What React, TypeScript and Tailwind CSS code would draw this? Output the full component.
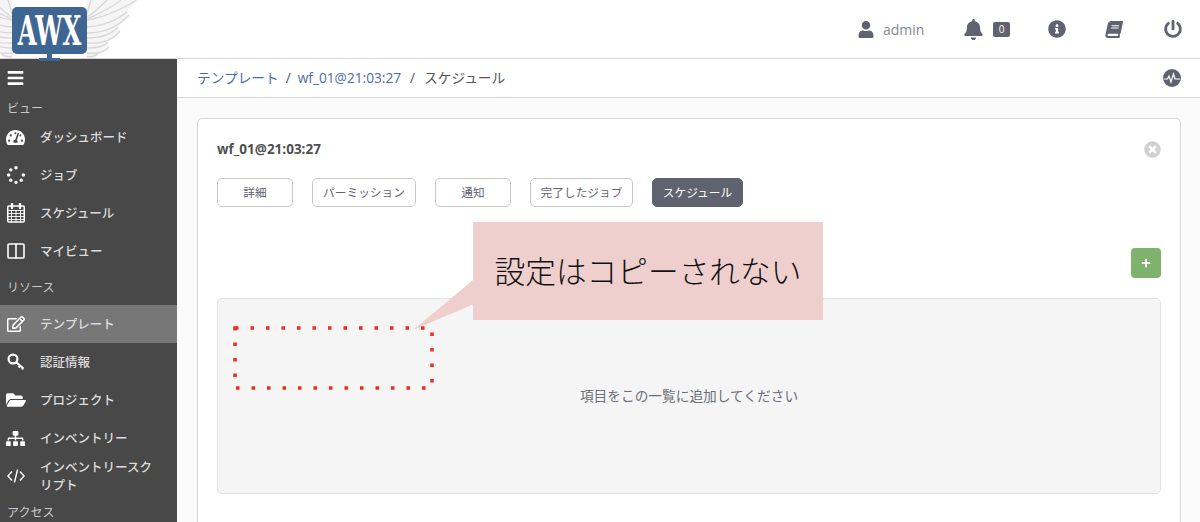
import React from 'react';
import {
  FaBars, FaBell, FaBook, FaFolderOpen, FaInfoCircle, FaPlus,
  FaPowerOff, FaRegEdit, FaSitemap, FaSpinner, FaTachometerAlt, FaTimesCircle, FaUser
} from 'react-icons/fa';

const font = 'font-["Open_Sans","Noto_Sans_CJK_JP",sans-serif]';

const ColumnsIcon = () => (
  <svg width="18" height="16" viewBox="0 0 18 16" fill="none" stroke="currentColor" strokeWidth="1.6">
    <rect x="1" y="1" width="16" height="14" rx="1" />
    <path d="M9 1v14" />
  </svg>
);

const CalendarIcon = () => (
  <svg width="18" height="20" viewBox="0 0 18 20" fill="none" stroke="currentColor">
    <rect x="0.75" y="3" width="16.5" height="16" rx="1" strokeWidth="1.5" />
    <path d="M1 7.5h16M1 10.5h16M1 13.5h16M1 16.5h16M4.5 7v12M9 7v12M13.5 7v12" strokeWidth="0.9" />
    <path d="M5 1v4M13 1v4" strokeWidth="2.4" strokeLinecap="round" />
  </svg>
);

const KeyIcon = () => (
  <svg width="18" height="18" viewBox="0 0 18 18" fill="none" stroke="currentColor" strokeWidth="2.2">
    <circle cx="6" cy="6" r="4.4" />
    <path d="M9.5 9.5l7 6M13 12.5l-1.5 2M16 15l-1 1.5" />
  </svg>
);

const CodeIcon = () => (
  <svg width="18" height="14" viewBox="0 0 18 14" fill="none" stroke="currentColor" strokeWidth="1.4">
    <path d="M5 2.5L0.9 7 5 11.5M13 2.5L17.1 7 13 11.5M10.6 0.5L7.4 13.5" />
  </svg>
);

const Wing = ({ className }: { className: string }) => (
  <svg width="50" height="58" viewBox="0 0 50 58" className={className}>
    <path d="M0 0H50L40 12L42 15L31 27L33 31L21 42L22 47L11 53L8 60H0Z" fill="#f5f5f5" />
    <g fill="none" stroke="#d9d9d9" strokeWidth="1.4">
      <path d="M0 20C14 18 30 12 50 0" />
      <path d="M0 27C14 26 28 22 40 12" />
      <path d="M0 33C14 33 30 28 42 15" />
      <path d="M0 38C12 38 24 35 31 27" />
      <path d="M0 43C14 44 26 40 33 31" />
      <path d="M0 48C10 48 18 46 21 42" />
      <path d="M0 53C10 54 18 52 22 47" />
      <path d="M0 57C5 57 9 56 11 53" />
      <path d="M4 0C2 6 1 10 0 14" />
      <path d="M20 0C14 6 8 12 0 17" />
      <path d="M34 0C24 8 14 13 0 19" />
    </g>
  </svg>
);

const Logo = () => (
  <div className="absolute left-0 top-0 h-[62px] w-[137px] overflow-hidden">
    <Wing className="absolute left-[87px] top-0" />
    <Wing className="absolute -left-[38px] top-0 -scale-x-100" />
    <div className="absolute left-[12px] top-[7px] flex h-[47px] w-[75px] items-center justify-center rounded-[5px] bg-[#3f6592]">
      <span className='font-["DejaVu_Serif_Condensed",serif] scale-y-150 text-[27px] font-bold leading-none text-white'>AWX</span>
    </div>
    <div className="absolute left-[47px] top-[54px] h-[4px] w-[5px] bg-[#3f6592]" />
    <div className="absolute left-[39px] top-[58px] h-[3px] w-[21px] bg-[#3f6592]" />
  </div>
);

const Header = () => (
  <header className="relative z-10 flex h-[59px] shrink-0 items-center border-b border-[#d7d7d7] bg-white text-[#5f6370]">
    <Logo />
    <div className="ml-auto flex items-center pr-[18px]">
      <FaUser className="h-[17px] w-[16px]" />
      <span className="ml-[9px] w-[41px] text-[14px] text-[#848992]">admin</span>
      <FaBell className="ml-[40px] h-[21px] w-[19px]" />
      <span className="ml-[10px] flex h-[15px] w-[17px] items-center justify-center rounded-[2px] bg-[#5f6370] text-[10px] text-white">0</span>
      <FaInfoCircle className="ml-[38px] h-[18px] w-[18px]" />
      <FaBook className="ml-[40px] h-[17px] w-[16px] -skew-x-12" />
      <FaPowerOff className="ml-[42px] h-[18px] w-[18px]" />
    </div>
  </header>
);

const SectionLabel = ({ text, className }: { text: string; className: string }) => (
  <div className={`pl-[7px] text-[12px] leading-[16px] text-[#c8c8c8] ${className}`}>{text}</div>
);

const NavItem = ({ icon, label, active }: { icon: React.ReactNode; label: string; active?: boolean }) => (
  <div className={`flex h-[38px] items-center text-[12.5px] font-medium leading-[18px] text-[#dcdcdc] ${active ? 'bg-[#777777]' : ''}`}>
    <span className="flex w-[40px] shrink-0 justify-center pr-[9px] text-white">{icon}</span>
    <span className="pr-[20px] pt-[2px]">{label}</span>
  </div>
);

const Sidebar = () => (
  <aside className="flex w-[177px] shrink-0 flex-col bg-[#484848]">
    <div className="flex h-[38px] items-center pl-[7px] text-white">
      <FaBars className="h-[18px] w-[17px]" />
    </div>
    <SectionLabel text="ビュー" className="pb-[1px] pt-[4px]" />
    <NavItem icon={<FaTachometerAlt size={19} />} label="ダッシュボード" />
    <NavItem icon={<FaSpinner size={18} />} label="ジョブ" />
    <NavItem icon={<CalendarIcon />} label="スケジュール" />
    <NavItem icon={<ColumnsIcon />} label="マイビュー" />
    <SectionLabel text="リソース" className="pb-[9px] pt-[10px]" />
    <NavItem icon={<FaRegEdit size={18} />} label="テンプレート" active />
    <NavItem icon={<KeyIcon />} label="認証情報" />
    <NavItem icon={<FaFolderOpen size={20} />} label="プロジェクト" />
    <NavItem icon={<FaSitemap size={19} />} label="インベントリー" />
    <NavItem icon={<CodeIcon />} label="インベントリースクリプト" />
    <SectionLabel text="アクセス" className="pt-[10px]" />
  </aside>
);

const ActivityIcon = () => (
  <svg width="18" height="18" viewBox="0 0 18 18">
    <circle cx="9" cy="9" r="9" fill="#5f6370" />
    <path d="M1 10h3.5l1.5-3 2 6 2.5-8 1.5 5h5" fill="none" stroke="#fff" strokeWidth="1.2" />
  </svg>
);

const Breadcrumb = () => (
  <div className="flex h-[39px] shrink-0 items-center border-b border-[#d7d7d7] bg-white pl-[20px] pr-[19px] text-[13.7px]">
    <span className="text-[#4a6e9f]">テンプレート</span>
    <span className="mx-[7px] text-[#555]">/</span>
    <span className="text-[#4a6e9f]">wf_01@21:03:27</span>
    <span className="mx-[9px] text-[#555]">/</span>
    <span className="text-[#555]">スケジュール</span>
    <span className="ml-auto"><ActivityIcon /></span>
  </div>
);

const tabs = [
  { label: '詳細', width: 'w-[76px]' },
  { label: 'パーミッション', width: 'w-[104px]' },
  { label: '通知', width: 'w-[76px]' },
  { label: '完了したジョブ', width: 'w-[103px]' },
  { label: 'スケジュール', width: 'w-[91px]', active: true }
];

const Callout = () => (
  <>
    <svg width="210" height="70" viewBox="0 0 210 70" fill="none" className="absolute left-[33px] top-[207px]">
      <rect x="4" y="2" width="197" height="60" stroke="#f4281c" strokeWidth="3.5" strokeDasharray="3.5 12" />
    </svg>
    <svg width="61" height="52" viewBox="0 0 61 52" className="absolute left-[215px] top-[161px]">
      <path d="M61 0V24L0 50L60 0Z" fill="#eecfcd" />
    </svg>
    <div className='absolute left-[275px] top-[103px] flex h-[98px] w-[350px] items-center justify-center bg-[#eecfcd] pb-[1px] font-["Noto_Sans_CJK_JP",sans-serif] text-[30.7px] font-light text-[#111]'>
      設定はコピーされない
    </div>
  </>
);

const Card = () => (
  <section className="relative h-[420px] rounded-[5px] border border-[#d7d7d7] bg-white px-[19px] pt-[20px]">
    <div className="flex h-[20px] items-center justify-between">
      <h2 className="text-[13.5px] font-bold text-[#4f4f4f]">wf_01@21:03:27</h2>
      <FaTimesCircle className="h-[17px] w-[17px] text-[#d0d0d0]" />
    </div>
    <div className="mt-[19px] flex gap-[19px]">
      {tabs.map((t) => (
        <div
          key={t.label}
          className={`flex h-[29px] items-center justify-center rounded-[5px] border text-[11.7px] ${t.width} ${
            t.active ? 'border-[#5f6370] bg-[#5f6370] text-white' : 'border-[#c8c8c8] bg-white text-[#5f6370]'
          }`}
        >
          {t.label}
        </div>
      ))}
    </div>
    <div className="mt-[41px] flex justify-end">
      <div className="flex h-[30px] w-[30px] items-center justify-center rounded-[4px] bg-[#7fb26c] text-white">
        <FaPlus size={10} />
      </div>
    </div>
    <div className="mt-[20px] flex h-[196px] items-center justify-center rounded-[5px] border border-[#e3e3e3] bg-[#f5f5f5] text-[13.7px] text-[#6b6f78]">
      項目をこの一覧に追加してください
    </div>
    <Callout />
  </section>
);

export default function App() {
  return (
    <div className={`flex h-[522px] flex-col overflow-hidden bg-white ${font}`}>
      <Header />
      <div className="flex min-h-0 flex-1">
        <Sidebar />
        <main className="flex min-w-0 flex-1 flex-col">
          <Breadcrumb />
          <div className="flex-1 bg-[#fbfbfb] pb-0 pl-[20px] pr-[19px] pt-[20px]">
            <Card />
          </div>
        </main>
      </div>
    </div>
  );
}
